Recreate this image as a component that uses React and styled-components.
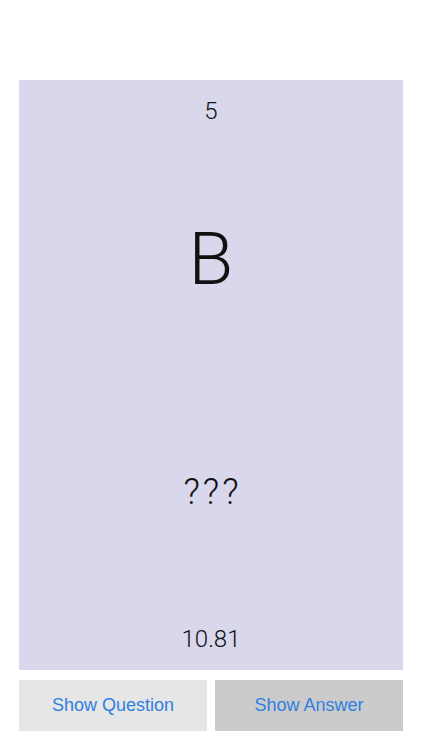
import React from "react";
import styled, { createGlobalStyle } from "styled-components";

const GlobalStyle = createGlobalStyle`
  body {
    margin: 0;
    background: #ffffff;
    font-family: Roboto, "Liberation Sans", sans-serif;
  }
`;

const Screen = styled.div`
  width: 422px;
  height: 750px;
  padding: 80px 19px 0;
  box-sizing: border-box;
  display: flex;
  flex-direction: column;
`;

const Card = styled.div`
  height: 590px;
  background: #d8d7eb;
  display: flex;
  flex-direction: column;
  color: #111;
  font-weight: 300;
`;

const Label = styled.div`
  height: 62px;
  display: flex;
  align-items: center;
  justify-content: center;
  font-size: 24px;
`;

const Half = styled.div`
  flex: 1;
  display: flex;
  align-items: center;
  justify-content: center;
  font-size: ${(p) => p.size}px;
  letter-spacing: ${(p) => p.spacing || 0}px;
  text-indent: ${(p) => p.spacing || 0}px;
`;

const Buttons = styled.div`
  margin-top: 10px;
  display: grid;
  grid-template-columns: 1fr 1fr;
  gap: 8px;
`;

const Button = styled.button`
  height: 51px;
  border: none;
  background: ${(p) => (p.dark ? "#cbcbcb" : "#e6e6e6")};
  color: #2f80e0;
  font-family: "Liberation Sans", Arial, sans-serif;
  font-weight: 400;
  font-size: 18px;
  padding: 0;
`;

export default function App() {
  return (
    <>
      <GlobalStyle />
      <Screen>
        <Card>
          <Label>5</Label>
          <Half size={73}>B</Half>
          <Half size={36} spacing={3}>???</Half>
          <Label>10.81</Label>
        </Card>
        <Buttons>
          <Button>Show Question</Button>
          <Button dark>Show Answer</Button>
        </Buttons>
      </Screen>
    </>
  );
}
